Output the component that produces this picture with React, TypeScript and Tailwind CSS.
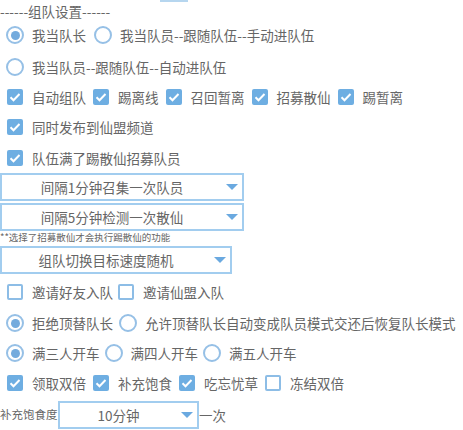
import React from 'react'

const font = { fontFamily: '"Noto Sans CJK SC", "Noto Sans", sans-serif' }

function Radio({ checked, label }: { checked?: boolean; label: string }) {
  return (
    <div className="flex items-center gap-2">
      <span className="flex h-[18px] w-[18px] items-center justify-center rounded-full border-2 border-[#96c0e6]">
        {checked && <span className="h-[9px] w-[9px] rounded-full bg-[#74abdd]" />}
      </span>
      <span>{label}</span>
    </div>
  )
}

function Check({ checked, label }: { checked?: boolean; label: string }) {
  return (
    <div className="flex items-center gap-[9px]">
      {checked ? (
        <span className="flex h-4 w-4 items-center justify-center rounded-[2px] bg-[#6eaee2]">
          <svg viewBox="0 0 16 16" className="h-4 w-4">
            <path d="M3.5 8.2l3 3 6-6.2" fill="none" stroke="#fff" strokeWidth="2" />
          </svg>
        </span>
      ) : (
        <span className="h-4 w-4 rounded-[2px] border-2 border-[#8dbde6]" />
      )}
      <span>{label}</span>
    </div>
  )
}

function Select({ label, className }: { label: string; className: string }) {
  return (
    <div className={`relative flex h-[28px] items-center justify-center border-2 border-[#a2cdef] pr-5 ${className}`}>
      <span>{label}</span>
      <svg viewBox="0 0 12 6" className="absolute right-[4px] top-1/2 h-[6px] w-3 -translate-y-1/2">
        <path d="M0 0h12L6 6z" fill="#6aa9e0" />
      </svg>
    </div>
  )
}

export default function App() {
  return (
    <div className="h-[430px] w-[463px] overflow-hidden bg-white text-[13.5px] text-[#666666]" style={font}>
      <div className="ml-[160px] h-[2px] w-[28px] bg-[#b6d6ef]" />
      <div className="flex h-[18px] items-center">------组队设置------</div>

      <div className="flex h-[30px] items-center gap-2 pl-[6px]">
        <Radio checked label="我当队长" />
        <Radio label="我当队员--跟随队伍--手动进队伍" />
      </div>
      <div className="mt-[2px] flex h-[30px] items-center pl-[6px]">
        <Radio label="我当队员--跟随队伍--自动进队伍" />
      </div>

      <div className="flex h-[30px] items-center gap-[7px] pl-[7px]">
        <Check checked label="自动组队" />
        <Check checked label="踢离线" />
        <Check checked label="召回暂离" />
        <Check checked label="招募散仙" />
        <Check checked label="踢暂离" />
      </div>
      <div className="flex h-[30px] items-center pl-[7px]">
        <Check checked label="同时发布到仙盟频道" />
      </div>
      <div className="mt-px flex h-[30px] items-center pl-[7px]">
        <Check checked label="队伍满了踢散仙招募队员" />
      </div>

      <Select label="间隔1分钟召集一次队员" className="w-[244px]" />
      <Select label="间隔5分钟检测一次散仙" className="mt-[2px] w-[244px]" />
      <div className="flex h-[14px] items-center text-[9.5px] leading-none">**选择了招募散仙才会执行踢散仙的功能</div>
      <Select label="组队切换目标速度随机" className="mt-px w-[232px]" />

      <div className="mt-[3px] flex h-[30px] items-center gap-[5px] pl-[7px]">
        <Check label="邀请好友入队" />
        <Check label="邀请仙盟入队" />
      </div>
      <div className="mt-px flex h-[30px] items-center gap-[6px] pl-[6px]">
        <Radio checked label="拒绝顶替队长" />
        <Radio label="允许顶替队长自动变成队员模式交还后恢复队长模式" />
      </div>
      <div className="flex h-[30px] items-center gap-[5px] pl-[6px]">
        <Radio checked label="满三人开车" />
        <Radio label="满四人开车" />
        <Radio label="满五人开车" />
      </div>
      <div className="flex h-[30px] items-center gap-[7px] pl-[7px]">
        <Check checked label="领取双倍" />
        <Check checked label="补充饱食" />
        <Check checked label="吃忘忧草" />
        <Check label="冻结双倍" />
      </div>

      <div className="mt-[3px] flex h-[28px] items-center">
        <span className="w-[58px] text-[11.5px]">补充饱食度</span>
        <Select label="10分钟" className="w-[141px]" />
        <span>一次</span>
      </div>
    </div>
  )
}
